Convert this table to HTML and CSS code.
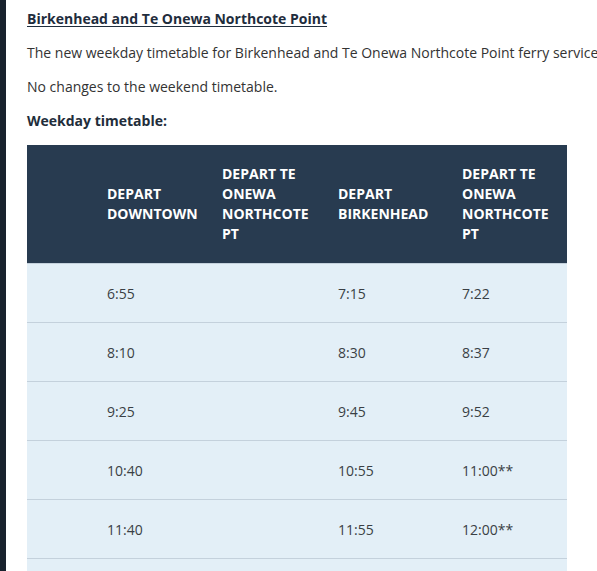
FILE: index.html
```
<!DOCTYPE html>
<html lang="en">
<head>
<meta charset="utf-8">
<title>Birkenhead and Te Onewa Northcote Point</title>
<link rel="stylesheet" href="styles.css">
</head>
<body>
<div class="page">
  <aside class="sidebar"></aside>
  <main class="content">
    <p class="title"><u>Birkenhead and Te Onewa Northcote Point</u></p>
    <p class="text">The new weekday timetable for Birkenhead and Te Onewa Northcote Point ferry services will begin from Monday.</p>
    <p class="text">No changes to the weekend timetable.</p>
    <p class="subtitle">Weekday timetable:</p>
    <table class="timetable">
      <thead>
        <tr>
          <th class="c0"></th>
          <th class="c1">Depart Downtown</th>
          <th class="c2">Depart Te Onewa Northcote Pt</th>
          <th class="c3">Depart Birkenhead</th>
          <th class="c4">Depart Te Onewa Northcote Pt</th>
        </tr>
      </thead>
      <tbody>
        <tr><td></td><td>6:55</td><td></td><td>7:15</td><td>7:22</td></tr>
        <tr><td></td><td>8:10</td><td></td><td>8:30</td><td>8:37</td></tr>
        <tr><td></td><td>9:25</td><td></td><td>9:45</td><td>9:52</td></tr>
        <tr><td></td><td>10:40</td><td></td><td>10:55</td><td>11:00**</td></tr>
        <tr><td></td><td>11:40</td><td></td><td>11:55</td><td>12:00**</td></tr>
        <tr><td></td><td>12:40</td><td></td><td>12:55</td><td>13:00**</td></tr>
      </tbody>
    </table>
  </main>
</div>
</body>
</html>
```
FILE: styles.css
```
html, body {
  margin: 0;
  padding: 0;
  overflow: hidden;
  background: #ffffff;
}
body {
  font-family: "Open Sans", "Liberation Sans", sans-serif;
  font-size: 14px;
  line-height: 21px;
  color: #333333;
}
.page {
  display: flex;
  min-height: 571px;
}
.sidebar {
  flex: 0 0 6px;
  background: #18222d;
}
.content {
  flex: 0 0 900px;
  padding: 8px 0 0 21px;
}
.title {
  margin: 0 0 13px;
  font-weight: 700;
  color: #1f2d3d;
}
.title u {
  text-decoration-thickness: 1px;
  text-underline-offset: 2px;
}
.text {
  margin: 0 0 13px;
  white-space: nowrap;
}
.subtitle {
  margin: 0 0 14px;
  font-weight: 700;
  color: #222d3a;
}
.timetable {
  border-collapse: collapse;
  table-layout: fixed;
  width: 540px;
}
.timetable th {
  background: #283b50;
  color: #ffffff;
  font-weight: 700;
  text-transform: uppercase;
  text-align: left;
  vertical-align: middle;
  line-height: 20px;
  padding: 19px 10px;
  height: 80px;
}
.timetable .c0 { width: 50px; }
.timetable .c1 { width: 95px; }
.timetable .c2 { width: 96px; }
.timetable .c3 { width: 104px; }
.timetable .c4 { width: 95px; }
.timetable td {
  background: #e3eff7;
  border-bottom: 1px solid #c4d1dc;
  height: 58px;
  padding: 0 10px;
  vertical-align: middle;
  color: #3a3f45;
}
.timetable tbody tr:first-child td {
  border-top: 1px solid #c4d1dc;
}
```
